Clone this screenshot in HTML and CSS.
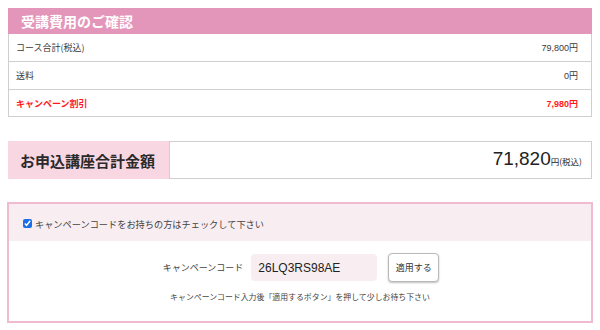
FILE: index.html
```html
<!DOCTYPE html>
<html lang="ja">
<head>
<meta charset="utf-8">
<link rel="stylesheet" href="styles.css">
</head>
<body>
<div class="page">
  <section class="fee">
    <h2 class="fee-title">受講費用のご確認</h2>
    <div class="fee-row"><span>コース合計(税込)</span><span class="val">79,800円</span></div>
    <div class="fee-row"><span>送料</span><span class="val">0円</span></div>
    <div class="fee-row discount"><span>キャンペーン割引</span><span class="val">7,980円</span></div>
  </section>

  <section class="total">
    <div class="total-label">お申込講座合計金額</div>
    <div class="total-value"><span class="num">71,820</span><span class="unit">円(税込)</span></div>
  </section>

  <section class="campaign">
    <label class="campaign-check"><input type="checkbox" checked> キャンペーンコードをお持ちの方はチェックして下さい</label>
    <div class="campaign-body">
      <div class="code-row">
        <span class="code-label">キャンペーンコード</span>
        <span class="code-input">26LQ3RS98AE</span>
        <button class="code-btn">適用する</button>
      </div>
      <p class="code-note">キャンペーンコード入力後「適用するボタン」を押して少しお待ち下さい</p>
    </div>
  </section>
</div>
</body>
</html>
```

FILE: styles.css
```css
* { box-sizing: border-box; }
html, body { margin: 0; padding: 0; background: #fff; }
body {
  font-family: "Noto Sans CJK JP", "Liberation Sans", sans-serif;
  color: #333;
  width: 600px;
  height: 330px;
  overflow: hidden;
}
.page {
  padding: 8px 8px 0 8px;
}
.fee {
  border-left: 1px solid #cfcfcf;
  border-right: 1px solid #cfcfcf;
}
.fee-title {
  margin: 0 -1px;
  height: 26px;
  background: #e396ba;
  color: #fff;
  font-size: 14px;
  font-weight: bold;
  line-height: 26px;
  padding-left: 13px;
}
.fee-row {
  display: flex;
  justify-content: space-between;
  align-items: center;
  height: 28px;
  border-bottom: 1px solid #cfcfcf;
  font-size: 9px;
  padding: 0 13px 0 7px;
  color: #3a3a3a;
}
.fee-row .val {
  font-family: "Liberation Sans", "Noto Sans CJK JP", sans-serif;
}
.fee-row.discount {
  color: #ff1a1a;
  font-weight: bold;
  height: 27px;
}
.total {
  display: flex;
  margin-top: 24px;
  height: 38px;
}
.total-label {
  width: 161px;
  background: #f8d7e3;
  font-size: 15px;
  font-weight: bold;
  color: #2a2a2a;
  display: flex;
  align-items: center;
  padding-left: 12px;
}
.total-value {
  flex: 1;
  border: 1px solid #cfcfcf;
  display: flex;
  align-items: baseline;
  justify-content: flex-end;
  padding: 6px 9px 0 0;
  color: #222;
}
.total-value .num {
  font-family: "Liberation Sans", sans-serif;
  font-size: 19px;
}
.total-value .unit {
  font-size: 8.5px;
}
.campaign {
  margin: 23px -1px 0 -1px;
  border: 2px solid #efbbd1;
  height: 121px;
}
.campaign-check {
  display: flex;
  align-items: center;
  height: 37px;
  background: #f8eef2;
  font-size: 9.2px;
  color: #444;
  padding-left: 14px;
  padding-top: 2px;
}
.campaign-check input {
  width: 9px;
  height: 9px;
  margin: 0 3px 0 0;
  accent-color: #1a6fe8;
}
.campaign-body {
  padding-top: 12px;
}
.code-row {
  display: flex;
  justify-content: center;
  align-items: center;
}
.code-label {
  font-size: 9px;
  color: #444;
  margin-right: 8px;
  margin-left: 2px;
}
.code-input {
  width: 126px;
  height: 27px;
  background: #f8eef1;
  border-radius: 4px;
  font-family: "Liberation Sans", sans-serif;
  font-size: 12px;
  color: #222;
  display: flex;
  align-items: center;
  padding-left: 7px;
}
.code-btn {
  margin-left: 11px;
  width: 51px;
  height: 29px;
  background: #fff;
  border: 1px solid #b9b9b9;
  border-radius: 4px;
  box-shadow: 0 1px 2px rgba(0,0,0,0.25);
  font-family: "Noto Sans CJK JP", sans-serif;
  font-size: 9px;
  color: #333;
  padding: 0;
}
.code-note {
  margin: 9px 0 0 0;
  text-align: center;
  font-size: 7.9px;
  color: #444;
}
```
